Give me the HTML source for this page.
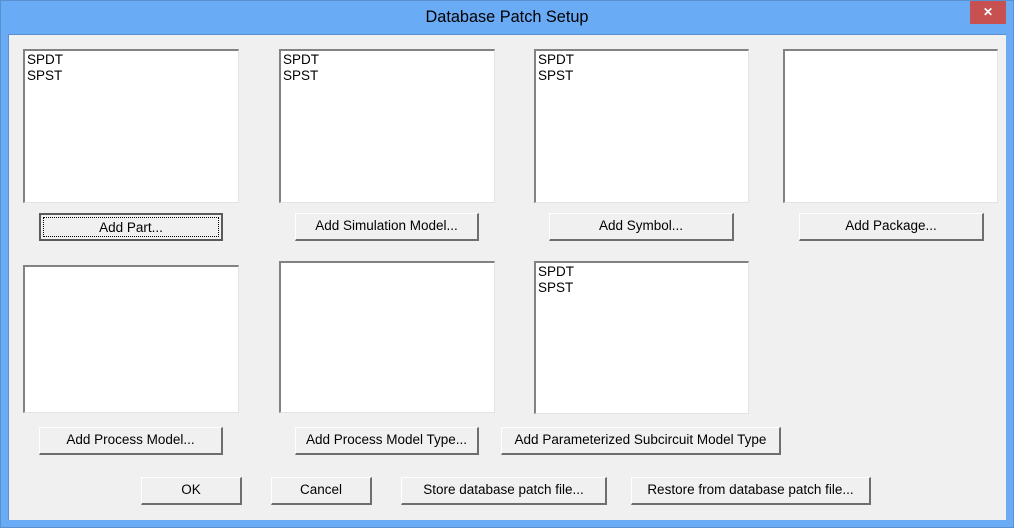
<!DOCTYPE html><html><head><style>
body{margin:0;width:1014px;height:528px;background:#6aabf5;position:relative;overflow:hidden;font-family:"Liberation Sans",sans-serif;font-size:13.5px}
.frame{position:absolute;left:0;top:0;width:1012px;height:526px;border:1px solid #5a8fd0}
.title{position:absolute;left:0;width:1014px;top:8px;text-align:center;font-size:16.3px;color:#000}
.close{position:absolute;left:970px;top:1px;width:36px;height:23px;background:#c75050;color:#fff;text-align:center;font-weight:bold;font-size:12px;line-height:23px}
.client{position:absolute;left:8px;top:34px;width:997px;height:485px;background:#f0f0f0;border-top:1px solid #5a8fd0;border-left:1px solid #5a8fd0}
.lb{position:absolute;background:#fff;border-top:2px solid #828282;border-left:2px solid #828282;border-right:1px solid #e3e3e3;border-bottom:1px solid #e3e3e3;box-sizing:border-box;padding:1px 0 0 2px;line-height:16px;color:#000}
.bt{position:absolute;box-sizing:border-box;background:#f0f0f0;border-top:1px solid #fff;border-left:1px solid #fff;border-right:2px solid #6e6e6e;border-bottom:2px solid #6e6e6e;text-align:center;line-height:24px;color:#000}
.def{border:2px solid #5a5a5a}
.def span{position:absolute;left:2px;top:2px;right:2px;bottom:2px;border:1px dotted #000;line-height:19px}
</style></head><body>
<div class="frame"></div>
<div class="title">Database Patch Setup</div>
<div class="close">✕</div>
<div class="client"></div>
<div class="lb" style="left:23px;top:49px;width:216px;height:154px">SPDT<br>SPST</div>
<div class="lb" style="left:279px;top:49px;width:216px;height:154px">SPDT<br>SPST</div>
<div class="lb" style="left:534px;top:49px;width:215px;height:154px">SPDT<br>SPST</div>
<div class="lb" style="left:783px;top:49px;width:215px;height:154px"></div>
<div class="bt def" style="left:39px;top:213px;width:184px;height:28px"><span>Add Part...</span></div>
<div class="bt" style="left:295px;top:213px;width:184px;height:28px">Add Simulation Model...</div>
<div class="bt" style="left:549px;top:213px;width:185px;height:28px">Add Symbol...</div>
<div class="bt" style="left:799px;top:213px;width:185px;height:28px">Add Package...</div>
<div class="lb" style="left:23px;top:265px;width:216px;height:148px"></div>
<div class="lb" style="left:279px;top:261px;width:216px;height:152px"></div>
<div class="lb" style="left:534px;top:261px;width:215px;height:153px">SPDT<br>SPST</div>
<div class="bt" style="left:39px;top:427px;width:184px;height:28px">Add Process Model...</div>
<div class="bt" style="left:295px;top:427px;width:184px;height:28px">Add Process Model Type...</div>
<div class="bt" style="left:501px;top:427px;width:280px;height:28px">Add Parameterized Subcircuit Model Type</div>
<div class="bt" style="left:141px;top:477px;width:101px;height:28px">OK</div>
<div class="bt" style="left:271px;top:477px;width:101px;height:28px">Cancel</div>
<div class="bt" style="left:401px;top:477px;width:206px;height:28px">Store database patch file...</div>
<div class="bt" style="left:631px;top:477px;width:240px;height:28px">Restore from database patch file...</div>
</body></html>
